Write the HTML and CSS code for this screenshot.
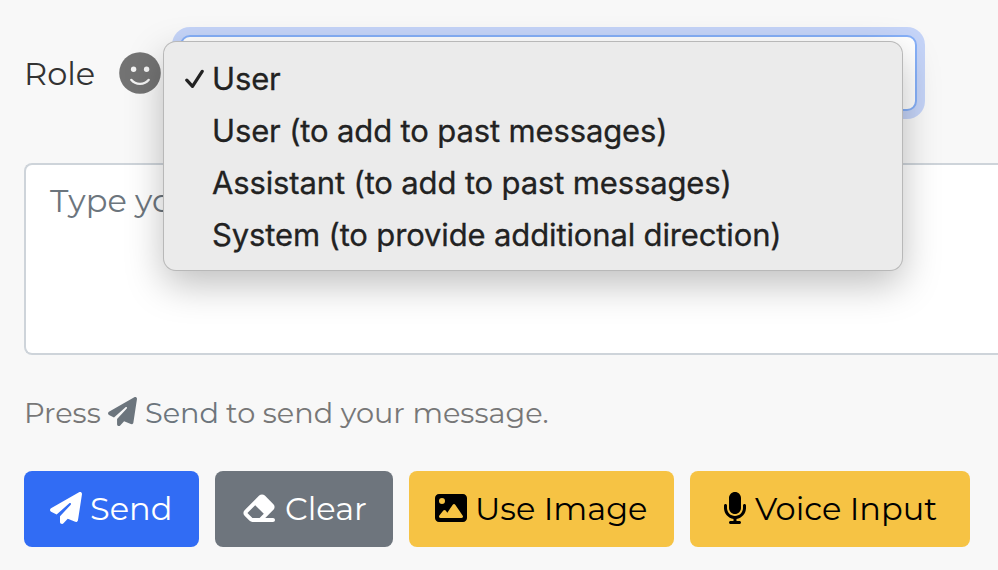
FILE: index.html
```
<!DOCTYPE html>
<html lang="en">
<head>
<meta charset="utf-8">
<title>Message</title>
<link rel="stylesheet" href="styles.css">
</head>
<body>
<svg class="sprite" width="0" height="0">
  <symbol id="plane" viewBox="0 0 512 512"><path d="M498.1 5.6c10.1 7 15.4 19.1 13.5 31.2l-64 416c-1.5 9.7-7.4 18.2-16 23s-18.9 5.4-28 1.6L284 427.7l-68.5 74.1c-8.9 9.7-22.9 12.9-35.2 8.1S160 493.2 160 480V396.4c0-4 1.5-7.8 4.2-10.7L331.8 202.8c5.8-6.3 5.6-16-.4-22s-15.7-6.4-22-.7L106 360.8 17.7 316.6C7.1 311.3 .3 300.7 0 288.9s5.9-22.8 16.1-28.7l448-256c10.7-6.1 23.9-5.5 34 1.4z"/></symbol>
</svg>
<main class="composer">
  <div class="role-row">
    <span class="role-label">Role</span>
    <svg class="face" viewBox="0 0 42 42"><circle cx="21" cy="21" r="20.8" fill="#737373"/><circle cx="14.6" cy="17.2" r="2.7" fill="#f4f4f4"/><circle cx="27.6" cy="17.2" r="2.7" fill="#f4f4f4"/><path d="M12.2 27.8C16.5 33.2 25.5 33.2 29.8 27.8" fill="none" stroke="#f4f4f4" stroke-width="2.2" stroke-linecap="round"/></svg>
    <div class="select">
      <ul class="menu">
        <li class="option"><svg class="check" viewBox="0 0 20 20"><path d="M2.8 11.2L8.5 17.4L18.2 2.4" fill="none" stroke="#222" stroke-width="3.2" stroke-linecap="round" stroke-linejoin="round"/></svg><span>User</span></li>
        <li class="option"><span>User (to add to past messages)</span></li>
        <li class="option"><span>Assistant (to add to past messages)</span></li>
        <li class="option"><span>System (to provide additional direction)</span></li>
      </ul>
    </div>
  </div>
  <div class="message">Type your</div>
  <p class="hint"><span class="press">Press</span><span class="hint-send"><svg class="hint-icon"><use href="#plane"/></svg><span class="hint-word">Send</span></span><span class="hint-rest">to send your message.</span></p>
  <div class="actions">
    <button class="btn send"><svg class="icon"><use href="#plane"/></svg><span>Send</span></button>
    <button class="btn clear"><svg class="icon wide" viewBox="0 0 576 512"><path d="M290.7 57.4L57.4 290.7c-25 25-25 65.5 0 90.5l80 80c12 12 28.3 18.7 45.3 18.7H288h9.4H512c17.7 0 32-14.3 32-32s-14.3-32-32-32H387.9L518.6 285.3c25-25 25-65.5 0-90.5L381.3 57.4c-25-25-65.5-25-90.5 0zM297.4 416H288l-105.4 0-80-80L227.3 211.3 364.7 348.7 297.4 416z"/></svg><span>Clear</span></button>
    <button class="btn image"><svg class="icon" viewBox="0 0 512 512"><path d="M0 96C0 60.7 28.7 32 64 32H448c35.3 0 64 28.7 64 64V416c0 35.3-28.7 64-64 64H64c-35.3 0-64-28.7-64-64V96zM323.8 202.5c-4.5-6.6-11.9-10.5-19.8-10.5s-15.4 3.9-19.8 10.5l-87 127.6L170.7 297c-4.6-5.7-11.5-9-18.7-9s-14.2 3.3-18.7 9l-64 80c-5.8 7.2-6.9 17.1-2.9 25.4s12.4 13.6 21.6 13.6h96 32H424c8.9 0 17.1-4.9 21.2-12.8s3.6-17.4-1.4-24.7l-120-176zM112 192a48 48 0 1 0 0-96 48 48 0 1 0 0 96z"/></svg><span>Use Image</span></button>
    <button class="btn voice"><svg class="icon narrow" viewBox="0 0 384 512"><path d="M192 0C139 0 96 43 96 96V256c0 53 43 96 96 96s96-43 96-96V96c0-53-43-96-96-96zM64 216c0-13.3-10.7-24-24-24s-24 10.7-24 24v40c0 89.1 66.2 162.7 152 174.4V464H120c-13.3 0-24 10.7-24 24s10.7 24 24 24h72 72c13.3 0 24-10.7 24-24s-10.7-24-24-24H216V430.4c85.8-11.7 152-85.3 152-174.4V216c0-13.3-10.7-24-24-24s-24 10.7-24 24v40c0 70.7-57.3 128-128 128s-128-57.3-128-128V216z"/></svg><span>Voice Input</span></button>
  </div>
</main>
</body>
</html>
```
FILE: styles.css
```
* { box-sizing: border-box; }
body { margin: 0; height: 570px; overflow: hidden; background: #f8f8f8; color: #333; font-family: Montserrat, Inter, sans-serif; font-size: 32px; font-weight: 400; }
.sprite { position: absolute; }
svg { flex: none; fill: currentColor; }
span { white-space: nowrap; }
.composer { padding: 35px 24px 0; }
.role-row { display: flex; align-items: center; height: 76px; }
.role-label { width: 95px; }
.face { width: 42px; height: 42px; margin: 0 19px 1px 0; }
.select { position: relative; width: 737px; height: 76px; background: #fff; border: 2px solid #86b0f8; border-radius: 10px; box-shadow: 0 0 0 8px #c5d4f8; }
.menu { position: absolute; z-index: 1; left: -18px; top: 5px; width: 738px; height: 228px; margin: 0; padding: 11px 0 0; list-style: none; background: #ebebeb; border-radius: 12px; box-shadow: 0 0 0 1px #b8b8b8, 0 14px 38px rgba(0,0,0,.26); color: #222; font-family: Inter, sans-serif; font-size: 31px; letter-spacing: -0.14px; -webkit-text-stroke: 0.3px #222; }
.option { position: relative; display: flex; align-items: center; height: 52px; padding: 0 0 2px 48px; }
.check { position: absolute; left: 20px; top: 16px; width: 20px; height: 20px; }
.message { height: 192px; margin: 52px -24px 0 0; padding: 18px 24px; background: #fff; border: 2px solid #ced4da; border-right: 0; border-radius: 8px 0 0 8px; color: #6c757d; line-height: 36px; }
.hint { display: flex; align-items: center; height: 36px; margin: 39px 0 0; font-size: 28.8px; color: #777; }
.press { width: 84px; }
.hint-send { display: flex; align-items: center; color: #6c757d; }
.hint-icon { width: 29px; height: 29px; margin: 0 8px 1px 0; }
.hint-word { width: 81px; }
.actions { display: flex; gap: 16px; margin-top: 41px; }
.btn { display: flex; align-items: center; justify-content: flex-start; height: 76px; border: 0; border-radius: 8px; padding: 0 0 0 26px; color: #fff; font: inherit; gap: 8px; }
.btn span { margin-bottom: 2px; }
.icon { width: 32px; height: 32px; margin-bottom: 2px; }
.wide { width: 36px; }
.narrow { width: 24px; }
.send { width: 175px; background: #316cf4; }
.clear { width: 178px; background: #6e757d; }
.image { width: 265px; background: #f6c344; color: #000; }
.voice { width: 280px; padding-left: 33px; background: #f6c344; color: #000; }
```
